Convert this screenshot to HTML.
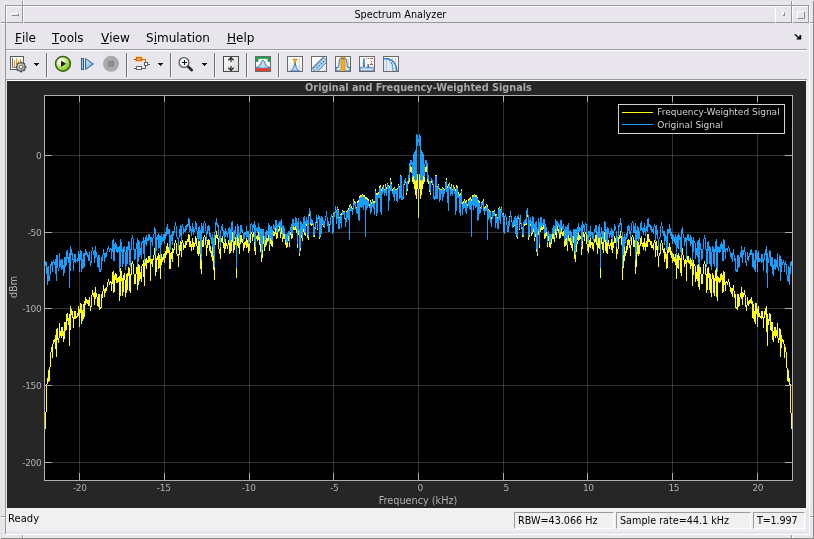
<!DOCTYPE html>
<html><head><meta charset="utf-8"><title>Spectrum Analyzer</title>
<style>
html,body{margin:0;padding:0}
body{width:814px;height:539px;position:relative;overflow:hidden;background:#e8e6ec;font-family:"DejaVu Sans","Liberation Sans",sans-serif;color:#000}
.a{position:absolute}
.g{background:#979799}
.w{background:#ffffff}
.menu{position:absolute;top:29px;height:18px;line-height:18px;font-size:12px;white-space:nowrap}
.menu u{text-decoration:none;display:inline-block;position:relative}
.menu u:after{content:"";position:absolute;left:0;right:0;top:14px;height:1px;background:#000}
.sep{position:absolute;top:53px;width:1px;height:24px;background:#707070}
.sep:after{content:"";position:absolute;left:1px;top:0;width:1px;height:24px;background:#f4f3f6}
.dd{position:absolute;top:63px;width:5px;height:1px;background:#111}
.dd:before{content:"";position:absolute;left:1px;top:1px;width:3px;height:1px;background:#111}
.dd:after{content:"";position:absolute;left:2px;top:2px;width:1px;height:1px;background:#111}
.xl{position:absolute;top:483px;width:40px;text-align:center;font-size:9px;line-height:11px;color:#afafaf;letter-spacing:-0.35px}
.yl{position:absolute;left:0;width:41.3px;text-align:right;font-size:9px;line-height:12px;color:#afafaf;letter-spacing:-0.35px}
.sb{position:absolute;top:512px;height:15px;border:1px solid;border-color:#9a9a9a #fff #fff #9a9a9a;font-size:9.65px;line-height:15px;padding-left:3px;box-sizing:content-box;white-space:nowrap}
.ico{position:absolute;top:56px;width:16px;height:16px}
#root{position:absolute;left:0;top:0;width:814px;height:539px;will-change:transform}
</style></head><body><div id="root">
<!-- ===== window frame (Motif-like) ===== -->
<div class="a" style="left:0;top:0;width:814px;height:1px;background:#e4e4e4"></div>
<div class="a" style="left:0;top:1px;width:814px;height:1px;background:#e6e5e8"></div>
<div class="a" style="left:0;top:0;width:1px;height:539px;background:#e4e4e4"></div>
<div class="a" style="left:1px;top:1px;width:1px;height:538px;background:#e6e5e8"></div>
<div class="a g" style="left:813px;top:1px;width:1px;height:538px;background:#8a8a8a"></div>
<div class="a g" style="left:1px;top:538px;width:813px;height:1px;background:#8a8a8a"></div>
<!-- inner bevel -->
<div class="a g" style="left:5px;top:5px;width:804px;height:1px"></div>
<div class="a g" style="left:5px;top:5px;width:1px;height:529px"></div>
<div class="a w" style="left:809px;top:6px;width:1px;height:529px"></div>
<div class="a w" style="left:6px;top:534px;width:804px;height:1px"></div>
<!-- corner notches -->
<div class="a g" style="left:22px;top:1px;width:1px;height:4px"></div><div class="a w" style="left:23px;top:1px;width:1px;height:4px"></div>
<div class="a g" style="left:791px;top:1px;width:1px;height:4px"></div><div class="a w" style="left:792px;top:1px;width:1px;height:4px"></div>
<div class="a g" style="left:22px;top:535px;width:1px;height:3px"></div><div class="a w" style="left:23px;top:535px;width:1px;height:3px"></div>
<div class="a g" style="left:791px;top:535px;width:1px;height:3px"></div><div class="a w" style="left:792px;top:535px;width:1px;height:3px"></div>
<div class="a g" style="left:1px;top:22px;width:4px;height:1px"></div><div class="a w" style="left:1px;top:23px;width:4px;height:1px"></div>
<div class="a g" style="left:810px;top:22px;width:3px;height:1px"></div><div class="a w" style="left:810px;top:23px;width:3px;height:1px"></div>
<div class="a g" style="left:1px;top:516px;width:4px;height:1px"></div><div class="a w" style="left:1px;top:517px;width:4px;height:1px"></div>
<div class="a g" style="left:810px;top:516px;width:3px;height:1px"></div><div class="a w" style="left:810px;top:517px;width:3px;height:1px"></div>

<!-- ===== title bar ===== -->
<!-- window menu button -->
<div class="a w" style="left:6px;top:6px;width:16px;height:1px"></div>
<div class="a w" style="left:6px;top:6px;width:1px;height:16px"></div>
<div class="a g" style="left:7px;top:22px;width:16px;height:1px"></div>
<div class="a g" style="left:22px;top:6px;width:1px;height:17px"></div>
<div class="a" style="left:11px;top:13px;width:6px;height:1px;border:1px solid;border-color:#fff #8e8e8e #8e8e8e #fff"></div>
<!-- title area -->
<div class="a w" style="left:23px;top:6px;width:752px;height:1px"></div>
<div class="a w" style="left:23px;top:6px;width:1px;height:16px"></div>
<div class="a g" style="left:24px;top:22px;width:751px;height:1px"></div>
<div class="a" id="ttl" style="left:24.4px;top:7px;width:752px;height:15px;line-height:15px;text-align:center;font-size:9.67px">Spectrum Analyzer</div>
<!-- minimize -->
<div class="a w" style="left:775px;top:6px;width:16px;height:1px"></div>
<div class="a w" style="left:775px;top:6px;width:1px;height:16px"></div>
<div class="a g" style="left:776px;top:22px;width:16px;height:1px"></div>
<div class="a g" style="left:791px;top:6px;width:1px;height:17px"></div>
<div class="a" style="left:782px;top:12px;width:1px;height:2px;border:1px solid;border-color:#fff #8e8e8e #8e8e8e #fff"></div>
<!-- maximize -->
<div class="a w" style="left:792px;top:6px;width:16px;height:1px"></div>
<div class="a w" style="left:792px;top:6px;width:1px;height:16px"></div>
<div class="a g" style="left:793px;top:22px;width:16px;height:1px"></div>
<div class="a g" style="left:808px;top:6px;width:1px;height:17px"></div>
<div class="a" style="left:797px;top:11px;width:6px;height:6px;border:1px solid;border-color:#fff #8e8e8e #8e8e8e #fff"></div>

<!-- ===== menu bar ===== -->
<div class="menu" style="left:15px"><u>F</u>ile</div>
<div class="menu" style="left:52px"><u>T</u>ools</div>
<div class="menu" style="left:101px"><u>V</u>iew</div>
<div class="menu" style="left:146px">S<u>i</u>mulation</div>
<div class="menu" style="left:227px"><u>H</u>elp</div>
<svg class="a" style="left:793px;top:33px" width="10" height="8" viewBox="0 0 10 8"><path d="M1.2 1.6 L2.4 1 L6 4.2 L6.6 2.2 L8.2 2 L8.2 6.6 L3.4 6.6 L3.6 5.4 L5 5.2 Z" fill="#000"/></svg>
<div class="a g" style="left:6px;top:49px;width:801px;height:1px;background:#9c9c9c"></div>
<div class="a w" style="left:6px;top:50px;width:801px;height:1px"></div>

<!-- ===== toolbar ===== -->
<!-- icon 1: configuration -->
<svg class="a" style="left:10px;top:56px" width="18" height="18" viewBox="0 0 18 18">
 <g shape-rendering="crispEdges">
  <rect x="0.5" y="0.5" width="13" height="13" fill="#fdfdfd" stroke="#5a5a5a"/>
  <rect x="2" y="2" width="1" height="10" fill="#6a6a6a"/>
  <rect x="2" y="11" width="9" height="1" fill="#8a8a8a"/>
  <rect x="4" y="4" width="1" height="7" fill="#f59d10"/>
  <rect x="6" y="2" width="1" height="9" fill="#f59d10"/>
  <rect x="8" y="5" width="1" height="4" fill="#f59d10"/>
  <rect x="10" y="3" width="1" height="4" fill="#f59d10"/>
 </g>
 <defs><linearGradient id="gg" x1="0" y1="0" x2="1" y2="1"><stop offset="0" stop-color="#e2e2e2"/><stop offset="1" stop-color="#8e8e8e"/></linearGradient></defs>
 <g transform="translate(11,11)">
  <g fill="#4a4a4a">
   <rect x="-1.2" y="-5.3" width="2.4" height="10.6"/>
   <rect x="-1.2" y="-5.3" width="2.4" height="10.6" transform="rotate(45)"/>
   <rect x="-1.2" y="-5.3" width="2.4" height="10.6" transform="rotate(90)"/>
   <rect x="-1.2" y="-5.3" width="2.4" height="10.6" transform="rotate(135)"/>
  </g>
  <circle r="4.1" fill="url(#gg)" stroke="#4e4e4e" stroke-width="0.9"/>
  <circle r="1.7" fill="#f4f4f4" stroke="#6a6a6a" stroke-width="0.9"/>
 </g>
</svg>
<div class="dd" style="left:34px"></div>
<div class="sep" style="left:46px"></div>
<!-- play -->
<svg class="a" style="left:54px;top:55px" width="18" height="18" viewBox="0 0 18 18">
 <defs><radialGradient id="gp" cx="0.33" cy="0.3" r="0.8"><stop offset="0" stop-color="#ffffff"/><stop offset="0.3" stop-color="#e4f5c0"/><stop offset="0.75" stop-color="#8fd032"/><stop offset="1" stop-color="#6aa51d"/></radialGradient></defs>
 <circle cx="9" cy="8.8" r="7.4" fill="url(#gp)" stroke="#38620f" stroke-width="1.5"/>
 <path d="M7 5.8 L12.2 8.8 L7 11.9 Z" fill="#1c1c1c"/>
</svg>
<!-- step forward -->
<svg class="a" style="left:80px;top:57px" width="16" height="14" viewBox="0 0 16 14">
 <defs><linearGradient id="gs" x1="0" y1="0" x2="1" y2="1"><stop offset="0" stop-color="#dcefff"/><stop offset="1" stop-color="#5fa3dc"/></linearGradient></defs>
 <rect x="1.5" y="1.5" width="2" height="11" fill="#9fcaf0" stroke="#2c5d8c"/>
 <path d="M5.6 1.6 L13.4 7 L5.6 12.4 Z" fill="url(#gs)" stroke="#2c5d8c" stroke-width="1"/>
</svg>
<!-- stop (disabled) -->
<svg class="a" style="left:102px;top:55px" width="18" height="18" viewBox="0 0 18 18">
 <circle cx="9" cy="8.8" r="8" fill="#a9a9a9"/>
 <rect x="6" y="5.8" width="6" height="6" fill="#8b8b8b"/>
</svg>
<div class="sep" style="left:126px"></div>
<!-- block diagram / highlight -->
<svg class="a" style="left:133px;top:55px" width="18" height="18" viewBox="0 0 18 18" shape-rendering="crispEdges">
 <rect x="2" y="1" width="8" height="6" fill="#ffd890"/>
 <rect x="3.5" y="2.5" width="5" height="3" fill="#f6a24a" stroke="#d8611a"/>
 <rect x="1" y="4" width="2" height="1" fill="#555"/>
 <rect x="9" y="4" width="4" height="1" fill="#d8611a"/>
 <rect x="12" y="4" width="1" height="3" fill="#d8611a"/>
 <rect x="11.5" y="7.5" width="3" height="3" fill="#fff" stroke="#666"/>
 <rect x="15" y="9" width="2" height="1" fill="#666"/>
 <rect x="12" y="11" width="1" height="3" fill="#666"/>
 <rect x="9" y="13" width="4" height="1" fill="#666"/>
 <rect x="3.5" y="11.5" width="5" height="3" fill="#fff" stroke="#666"/>
 <rect x="1" y="13" width="2" height="1" fill="#555"/>
</svg>
<div class="dd" style="left:158px"></div>
<div class="sep" style="left:170px"></div>
<!-- zoom -->
<svg class="a" style="left:177px;top:55px" width="18" height="18" viewBox="0 0 18 18">
 <line x1="10.5" y1="11" x2="14.8" y2="15.2" stroke="#2a2a2a" stroke-width="2.6" stroke-linecap="round"/>
 <circle cx="7" cy="7.5" r="4.9" fill="#eef6fd" stroke="#5a5a5a" stroke-width="1.3"/>
 <path d="M4.5 7.5 H9.5 M7 5 V10" stroke="#111" stroke-width="1" shape-rendering="crispEdges"/>
</svg>
<div class="dd" style="left:202px"></div>
<div class="sep" style="left:214px"></div>
<!-- autoscale -->
<svg class="a" style="left:223px;top:56px" width="16" height="16" viewBox="0 0 16 16">
 <defs><linearGradient id="ga" x1="0" y1="0" x2="1" y2="1"><stop offset="0" stop-color="#ffffff"/><stop offset="1" stop-color="#d4d4d4"/></linearGradient></defs>
 <rect x="0.5" y="0.5" width="15" height="15" fill="url(#ga)" stroke="#4a4a4a" shape-rendering="crispEdges"/>
 <path d="M8 2 V6 M5.3 4.2 L8 1.6 L10.7 4.2" fill="none" stroke="#222" stroke-width="1.2"/>
 <path d="M8 14 V10 M5.3 11.8 L8 14.4 L10.7 11.8" fill="none" stroke="#222" stroke-width="1.2"/>
</svg>
<div class="sep" style="left:246px"></div>
<!-- spectral mask -->
<svg class="a" style="left:255px;top:56px" width="16" height="16" viewBox="0 0 16 16">
 <rect x="0" y="0" width="16" height="16" fill="#fff"/>
 <path d="M0.5 0.5 H15.5 V5.5 H13 V3.5 Q13 2.6 12 2.6 H4 Q3 2.6 3 3.5 V5.5 H0.5 Z" fill="#17a84a" stroke="#12823a" stroke-width="0.6"/>
 <path d="M0 11.3 C3.5 11.3 4.8 10 5.8 7.6 C6.7 5.4 7.2 4.4 8 4.4 C8.8 4.4 9.3 5.4 10.2 7.6 C11.2 10 12.5 11.3 16 11.3 V12.2 H0 Z" fill="#b6d6ee" stroke="#2b6fb3" stroke-width="1"/><path d="M8 5 V12" stroke="#dfeaf3" stroke-width="0.8"/>
 <rect x="0" y="12.2" width="16" height="3.3" fill="#e53a2a"/>
 <rect x="0.5" y="0.5" width="15" height="15" fill="none" stroke="#6a6a6a" stroke-width="1" shape-rendering="crispEdges"/>
</svg>
<div class="sep" style="left:278px"></div>
<!-- peak finder -->
<svg class="a" style="left:287px;top:56px" width="16" height="16" viewBox="0 0 16 16">
 <defs><linearGradient id="gb" x1="0" y1="0" x2="0" y2="1"><stop offset="0" stop-color="#ffffff"/><stop offset="1" stop-color="#e4e8ec"/></linearGradient></defs>
 <rect x="0.5" y="0.5" width="15" height="15" fill="url(#gb)" stroke="#6a6a6a" shape-rendering="crispEdges"/>
 <rect x="12" y="2" width="1" height="12" fill="#d2d6da"/>
 <path d="M3.5 15 C6.5 14 7.2 10 8 6 C8.8 10 9.5 14 12.5 15 Z" fill="#b9d7ee" stroke="#2b6fb3" stroke-width="0.9"/>
 <path d="M5.6 3 H10.4 L8.6 5.6 V7.4 H7.4 V5.6 Z" fill="#f0ac18" stroke="#b87a08" stroke-width="0.5"/>
</svg>
<!-- ruler / cursor measurements -->
<svg class="a" style="left:311px;top:56px" width="16" height="16" viewBox="0 0 16 16">
 <rect x="0.5" y="0.5" width="15" height="15" fill="url(#gb)" stroke="#6a6a6a" shape-rendering="crispEdges"/>
 <path d="M1 12.6 L12.6 1" stroke="#333" stroke-width="1"/>
 <g transform="rotate(-45 8.5 8.5)">
  <rect x="0.5" y="6.6" width="16" height="5.4" fill="#a9d2ef" stroke="#3c78ad" stroke-width="0.8"/>
  <path d="M4.5 8.6 V10 M7.5 8.6 V10 M10.5 8.6 V10 M13.5 8.6 V10" stroke="#2b5f8f" stroke-width="1"/>
 </g>
 <rect x="0.5" y="0.5" width="15" height="15" fill="none" stroke="#6a6a6a" shape-rendering="crispEdges"/>
</svg>
<!-- channel measurements -->
<svg class="a" style="left:335px;top:56px" width="16" height="16" viewBox="0 0 16 16">
 <rect x="0.5" y="0.5" width="15" height="15" fill="url(#gb)" stroke="#6a6a6a" shape-rendering="crispEdges"/>
 <rect x="13" y="2" width="1" height="12" fill="#d2d6da"/>
 <path d="M1 11.5 H3 C4.2 11.5 3.8 2.6 5.2 2.6 H10.8 C12.2 2.6 11.8 11.5 13 11.5 H15 V15 H1 Z" fill="#cfe3f3" stroke="#2b6fb3" stroke-width="1"/>
 <rect x="6" y="1" width="4" height="14" fill="#f7ad12"/>
 <path d="M6 1 V15 M10 1 V15" stroke="#d98608" stroke-width="0.7"/>
 <path d="M6.2 3.2 L7.2 2 L8 3.2 L8.8 2 L9.8 3.2" fill="none" stroke="#2b6fb3" stroke-width="0.8"/>
 <rect x="0.5" y="0.5" width="15" height="15" fill="none" stroke="#6a6a6a" shape-rendering="crispEdges"/>
</svg>
<!-- distortion measurements -->
<svg class="a" style="left:359px;top:56px" width="16" height="16" viewBox="0 0 16 16">
 <rect x="0.5" y="0.5" width="15" height="15" fill="url(#gb)" stroke="#6a6a6a" shape-rendering="crispEdges"/>
 <path d="M1 12 L2.2 11 L3.4 12.2 L4.4 11 L4.9 2.4 L5.5 11.4 L6.6 12.3 L7.8 11.2 L8.6 12.2 L9.2 8 L9.8 12 L11 11.2 L12.2 12.3 L13.4 11.4 L15 12.2 V15 H1 Z" fill="#cfe3f3" stroke="#2b6fb3" stroke-width="0.9"/>
 <g fill="#c8561a" shape-rendering="crispEdges">
  <rect x="7" y="2" width="1" height="1"/><rect x="9" y="2" width="1" height="1"/><rect x="11" y="2" width="3" height="1"/>
  <rect x="12" y="5" width="1" height="1"/><rect x="12" y="6.5" width="1" height="1"/><rect x="11" y="8" width="3" height="1"/>
 </g>
 <rect x="0.5" y="0.5" width="15" height="15" fill="none" stroke="#6a6a6a" shape-rendering="crispEdges"/>
</svg>
<!-- CCDF -->
<svg class="a" style="left:383px;top:56px" width="16" height="16" viewBox="0 0 16 16">
 <rect x="0.5" y="0.5" width="15" height="15" fill="url(#gb)" stroke="#6a6a6a" shape-rendering="crispEdges"/>
 <path d="M1 2.6 H3 C8 2.6 10 8 10.2 15 H1 Z" fill="#d8e8f5"/>
 <path d="M3.5 2 V15 M9.5 2 V15 M12.5 2 V15" stroke="#c6cacf" stroke-width="1"/>
 <path d="M1 2.6 H3 C9.5 2.6 13.6 8 13.8 15" fill="none" stroke="#1f7bd0" stroke-width="1.3"/>
 <path d="M1 2.6 H3 C7 2.8 9.8 8 10.2 15" fill="none" stroke="#1f7bd0" stroke-width="1.2" stroke-dasharray="1.6 1.2"/>
 <rect x="0.5" y="0.5" width="15" height="15" fill="none" stroke="#6a6a6a" shape-rendering="crispEdges"/>
</svg>

<div class="a" style="left:6px;top:79px;width:801px;height:1px;background:#9c9c9c"></div>
<div class="a w" style="left:6px;top:80px;width:801px;height:1px"></div>
<div class="a" style="left:806px;top:81px;width:3px;height:427px;background:#f1f0f3"></div>

<!-- ===== plot panel ===== -->
<div class="a" style="left:7px;top:81px;width:799px;height:427px;background:#262626"></div>
<div class="a" id="ptitle" style="left:7px;top:81px;width:823px;text-align:center;font-size:9.73px;font-weight:bold;line-height:13px;color:#a9a9a9;white-space:nowrap">Original and Frequency-Weighted Signals</div>
<svg class="ax" width="814" height="539" viewBox="0 0 814 539" style="position:absolute;left:0;top:0" shape-rendering="crispEdges">
<rect x="44" y="95" width="749" height="386" fill="#000"/>
<polyline points="45.0,428.8 45.5,428.8 45.9,416.5 46.4,398.1 46.9,385.8 47.4,378.5 47.9,381.7 48.4,370.2 48.9,381.7 49.4,377.2 49.8,371.2 50.3,361.0 50.8,354.3 51.3,348.8 51.8,347.6 52.3,357.6 52.8,346.4 53.2,341.2 53.7,341.2 54.2,340.2 54.7,342.1 55.2,336.6 55.7,335.0 56.2,356.8 56.6,332.7 57.1,327.7 57.6,330.6 58.1,342.5 58.6,341.2 59.1,337.5 59.6,323.5 60.1,332.2 60.5,335.4 61.0,335.1 61.5,338.3 62.0,326.7 62.5,331.8 63.0,335.9 63.5,331.4 63.9,342.4 64.4,326.2 64.9,321.7 65.4,323.4 65.9,331.3 66.4,323.5 66.9,314.7 67.3,314.0 67.8,317.8 68.3,325.2 68.8,321.4 69.3,314.3 69.8,346.0 70.3,307.9 70.8,306.3 71.2,311.0 71.7,313.5 72.2,312.6 72.7,318.4 73.2,317.1 73.7,327.9 74.2,311.0 74.6,315.0 75.1,319.3 75.6,310.8 76.1,317.3 76.6,316.7 77.1,315.8 77.6,314.5 78.0,316.6 78.5,305.9 79.0,308.1 79.5,326.5 80.0,313.9 80.5,304.1 81.0,303.7 81.5,311.6 81.9,324.0 82.4,312.2 82.9,312.2 83.4,304.2 83.9,318.7 84.4,312.7 84.9,302.7 85.3,303.3 85.8,297.1 86.3,301.3 86.8,302.2 87.3,299.6 87.8,303.0 88.3,304.2 88.7,306.1 89.2,297.4 89.7,300.1 90.2,309.3 90.7,311.1 91.2,304.6 91.7,298.8 92.2,292.3 92.6,290.2 93.1,294.2 93.6,297.4 94.1,292.5 94.6,305.0 95.1,297.4 95.6,287.0 96.0,292.8 96.5,296.7 97.0,297.1 97.5,306.3 98.0,297.9 98.5,306.6 99.0,293.7 99.4,295.2 99.9,309.7 100.4,306.6 100.9,309.4 101.4,302.1 101.9,295.7 102.4,296.7 102.9,292.5 103.3,287.4 103.8,285.4 104.3,294.1 104.8,296.9 105.3,288.2 105.8,291.8 106.3,290.8 106.7,287.7 107.2,285.9 107.7,284.2 108.2,280.2 108.7,279.6 109.2,283.4 109.7,285.3 110.1,280.8 110.6,282.0 111.1,282.3 111.6,291.2 112.1,282.6 112.6,272.8 113.1,271.4 113.6,279.9 114.0,292.5 114.5,284.5 115.0,275.2 115.5,273.3 116.0,280.1 116.5,274.3 117.0,282.6 117.4,277.6 117.9,282.7 118.4,278.5 118.9,277.2 119.4,275.8 119.9,301.0 120.4,279.7 120.8,268.4 121.3,274.0 121.8,279.1 122.3,278.0 122.8,295.5 123.3,287.8 123.8,276.3 124.3,273.5 124.7,275.6 125.2,282.3 125.7,297.0 126.2,290.5 126.7,276.2 127.2,273.0 127.7,290.3 128.1,272.5 128.6,267.3 129.1,268.8 129.6,279.5 130.1,293.1 130.6,275.0 131.1,274.8 131.5,271.2 132.0,263.5 132.5,260.9 133.0,264.0 133.5,271.3 134.0,274.3 134.5,275.1 135.0,284.3 135.4,278.0 135.9,275.5 136.4,267.1 136.9,271.9 137.4,262.3 137.9,290.4 138.4,268.2 138.8,264.0 139.3,266.3 139.8,281.0 140.3,274.9 140.8,272.0 141.3,282.3 141.8,267.1 142.2,264.5 142.7,266.2 143.2,262.5 143.7,260.0 144.2,285.6 144.7,262.4 145.2,265.7 145.7,264.7 146.1,257.6 146.6,268.8 147.1,261.9 147.6,261.2 148.1,261.9 148.6,256.0 149.1,257.4 149.5,255.6 150.0,261.8 150.5,280.9 151.0,259.0 151.5,261.0 152.0,263.8 152.5,267.3 152.9,260.2 153.4,257.0 153.9,256.1 154.4,250.7 154.9,248.5 155.4,256.3 155.9,275.9 156.4,260.1 156.8,257.7 157.3,259.2 157.8,257.5 158.3,253.1 158.8,269.3 159.3,266.2 159.8,255.4 160.2,278.6 160.7,260.5 161.2,253.8 161.7,264.5 162.2,260.6 162.7,258.2 163.2,259.2 163.6,256.9 164.1,253.3 164.6,263.0 165.1,256.9 165.6,250.9 166.1,254.5 166.6,252.8 167.1,244.7 167.5,243.2 168.0,252.5 168.5,251.1 169.0,247.4 169.5,260.5 170.0,268.5 170.5,267.0 170.9,254.0 171.4,251.8 171.9,258.1 172.4,262.3 172.9,248.5 173.4,253.1 173.9,249.3 174.3,249.4 174.8,245.1 175.3,239.7 175.8,242.7 176.3,243.8 176.8,252.5 177.3,255.3 177.8,254.3 178.2,257.1 178.7,266.7 179.2,247.5 179.7,251.4 180.2,241.8 180.7,242.0 181.2,257.1 181.6,250.5 182.1,239.9 182.6,242.6 183.1,243.3 183.6,249.6 184.1,247.4 184.6,246.0 185.0,248.0 185.5,242.9 186.0,241.5 186.5,245.1 187.0,240.8 187.5,239.2 188.0,242.1 188.5,234.8 188.9,234.1 189.4,236.3 189.9,247.1 190.4,244.6 190.9,241.5 191.4,251.0 191.9,248.4 192.3,243.3 192.8,237.9 193.3,250.3 193.8,242.2 194.3,245.2 194.8,246.2 195.3,241.1 195.7,237.5 196.2,238.5 196.7,242.3 197.2,247.9 197.7,249.9 198.2,255.9 198.7,243.0 199.2,240.6 199.6,251.1 200.1,254.2 200.6,244.9 201.1,274.3 201.6,237.7 202.1,241.0 202.6,240.9 203.0,247.2 203.5,243.0 204.0,237.2 204.5,236.3 205.0,237.2 205.5,239.8 206.0,245.2 206.4,255.5 206.9,245.1 207.4,247.8 207.9,240.0 208.4,238.8 208.9,245.0 209.4,240.1 209.9,248.8 210.3,248.0 210.8,252.5 211.3,250.6 211.8,254.2 212.3,260.6 212.8,247.5 213.3,256.1 213.7,251.3 214.2,280.4 214.7,245.2 215.2,244.4 215.7,242.2 216.2,231.3 216.7,233.5 217.1,239.3 217.6,236.7 218.1,237.8 218.6,244.6 219.1,249.7 219.6,252.3 220.1,254.7 220.6,259.3 221.0,242.4 221.5,240.1 222.0,238.1 222.5,237.2 223.0,242.9 223.5,248.0 224.0,242.3 224.4,253.1 224.9,252.1 225.4,239.2 225.9,242.5 226.4,245.5 226.9,244.0 227.4,248.2 227.8,249.1 228.3,239.8 228.8,245.4 229.3,237.8 229.8,254.1 230.3,251.0 230.8,239.9 231.3,251.2 231.7,235.1 232.2,231.7 232.7,237.0 233.2,245.3 233.7,252.9 234.2,244.2 234.7,250.0 235.1,238.7 235.6,237.8 236.1,245.9 236.6,278.0 237.1,239.5 237.6,234.2 238.1,248.2 238.5,236.6 239.0,242.7 239.5,253.5 240.0,244.7 240.5,234.6 241.0,242.0 241.5,235.2 242.0,239.0 242.4,239.3 242.9,241.2 243.4,250.0 243.9,250.2 244.4,242.1 244.9,242.2 245.4,243.5 245.8,244.7 246.3,235.8 246.8,247.7 247.3,245.3 247.8,239.9 248.3,242.1 248.8,252.9 249.2,249.7 249.7,250.6 250.2,238.3 250.7,234.4 251.2,232.4 251.7,232.9 252.2,234.3 252.7,240.8 253.1,234.9 253.6,236.4 254.1,231.3 254.6,229.6 255.1,255.4 255.6,233.1 256.1,238.7 256.5,236.6 257.0,238.8 257.5,235.4 258.0,240.6 258.5,231.3 259.0,235.3 259.5,240.5 259.9,242.8 260.4,251.7 260.9,237.5 261.4,237.6 261.9,262.1 262.4,244.4 262.9,236.1 263.4,238.1 263.8,242.3 264.3,245.0 264.8,251.0 265.3,242.4 265.8,239.8 266.3,237.3 266.8,244.5 267.2,239.6 267.7,238.9 268.2,241.2 268.7,229.5 269.2,232.9 269.7,251.3 270.2,240.4 270.6,234.3 271.1,233.5 271.6,240.6 272.1,247.0 272.6,235.5 273.1,235.2 273.6,230.7 274.1,232.3 274.5,235.6 275.0,234.0 275.5,227.8 276.0,226.5 276.5,227.1 277.0,238.6 277.5,232.2 277.9,232.9 278.4,230.6 278.9,229.3 279.4,231.4 279.9,226.4 280.4,229.2 280.9,237.5 281.3,224.8 281.8,226.8 282.3,238.8 282.8,241.8 283.3,234.6 283.8,230.0 284.3,238.5 284.8,237.7 285.2,240.9 285.7,239.6 286.2,247.8 286.7,239.1 287.2,246.8 287.7,242.5 288.2,235.7 288.6,241.0 289.1,237.4 289.6,247.4 290.1,232.9 290.6,232.5 291.1,231.5 291.6,228.0 292.0,238.5 292.5,231.4 293.0,222.9 293.5,223.4 294.0,229.5 294.5,226.9 295.0,229.7 295.5,225.2 295.9,221.0 296.4,222.7 296.9,228.5 297.4,247.5 297.9,226.5 298.4,221.8 298.9,233.8 299.3,233.5 299.8,255.8 300.3,244.4 300.8,224.2 301.3,226.3 301.8,235.5 302.3,240.7 302.7,226.6 303.2,232.2 303.7,221.5 304.2,218.4 304.7,232.8 305.2,235.6 305.7,223.6 306.2,226.3 306.6,219.3 307.1,223.6 307.6,227.8 308.1,239.6 308.6,228.4 309.1,213.8 309.6,210.1 310.0,212.7 310.5,220.2 311.0,225.1 311.5,221.2 312.0,225.5 312.5,222.2 313.0,224.2 313.4,232.0 313.9,237.1 314.4,234.8 314.9,229.2 315.4,228.9 315.9,225.5 316.4,216.4 316.9,218.3 317.3,230.2 317.8,221.1 318.3,216.6 318.8,216.3 319.3,219.2 319.8,237.4 320.3,236.7 320.7,221.2 321.2,216.7 321.7,234.3 322.2,219.8 322.7,217.7 323.2,226.9 323.7,220.6 324.1,224.1 324.6,227.9 325.1,220.0 325.6,218.4 326.1,215.2 326.6,211.3 327.1,218.2 327.6,226.0 328.0,221.3 328.5,226.0 329.0,231.7 329.5,229.2 330.0,224.7 330.5,218.4 331.0,216.9 331.4,214.6 331.9,215.0 332.4,221.3 332.9,233.5 333.4,222.1 333.9,213.4 334.4,215.3 334.8,215.5 335.3,207.5 335.8,205.8 336.3,215.1 336.8,222.6 337.3,212.3 337.8,206.8 338.3,211.3 338.7,227.5 339.2,227.8 339.7,221.8 340.2,214.0 340.7,215.9 341.2,225.7 341.7,227.1 342.1,209.8 342.6,213.2 343.1,213.7 343.6,210.7 344.1,214.9 344.6,211.2 345.1,219.3 345.5,226.0 346.0,221.8 346.5,210.9 347.0,216.6 347.5,209.6 348.0,214.3 348.5,218.6 349.0,208.3 349.4,238.5 349.9,205.6 350.4,204.9 350.9,209.8 351.4,207.4 351.9,206.7 352.4,211.6 352.8,213.8 353.3,200.9 353.8,199.8 354.3,203.0 354.8,202.2 355.3,202.2 355.8,206.8 356.2,207.2 356.7,210.4 357.2,212.1 357.7,201.7 358.2,201.2 358.7,215.7 359.2,219.7 359.7,199.5 360.1,195.5 360.6,200.9 361.1,206.1 361.6,201.0 362.1,193.6 362.6,196.4 363.1,206.5 363.5,208.2 364.0,195.0 364.5,196.6 365.0,203.2 365.5,235.0 366.0,197.1 366.5,203.1 366.9,207.7 367.4,201.6 367.9,198.3 368.4,202.7 368.9,203.2 369.4,206.0 369.9,204.3 370.4,212.4 370.8,199.9 371.3,204.1 371.8,209.9 372.3,198.7 372.8,202.0 373.3,201.6 373.8,204.2 374.2,210.1 374.7,212.8 375.2,194.7 375.7,188.8 376.2,195.6 376.7,213.9 377.2,209.1 377.6,199.3 378.1,192.1 378.6,194.5 379.1,196.0 379.6,187.1 380.1,186.4 380.6,194.7 381.1,213.5 381.5,189.2 382.0,189.0 382.5,192.2 383.0,187.3 383.5,185.4 384.0,189.7 384.5,189.3 384.9,193.7 385.4,184.4 385.9,185.8 386.4,194.2 386.9,188.2 387.4,183.1 387.9,183.4 388.3,187.3 388.8,209.4 389.3,186.3 389.8,195.5 390.3,182.0 390.8,178.4 391.3,187.7 391.8,186.6 392.2,191.3 392.7,191.7 393.2,188.5 393.7,189.5 394.2,199.7 394.7,187.0 395.2,192.2 395.6,192.6 396.1,188.6 396.6,194.1 397.1,201.1 397.6,191.5 398.1,187.5 398.6,185.3 399.0,186.2 399.5,188.6 400.0,199.1 400.5,179.4 401.0,175.4 401.5,181.7 402.0,199.5 402.5,199.5 402.9,196.6 403.4,199.4 403.9,185.8 404.4,181.3 404.9,183.1 405.4,180.1 405.9,181.0 406.3,189.6 406.8,195.2 407.3,186.0 407.8,187.8 408.3,178.5 408.8,183.5 409.3,180.2 409.7,172.1 410.2,165.3 410.7,171.5 411.2,168.1 411.7,167.0 412.2,176.3 412.7,181.6 413.2,166.2 413.6,183.9 414.1,167.0 414.6,189.3 415.1,170.9 415.6,194.6 416.1,177.0 416.6,198.5 417.0,173.9 417.5,177.0 418.0,189.3 418.5,218.4 419.0,189.3 419.5,177.0 420.0,173.9 420.4,198.5 420.9,177.0 421.4,194.6 421.9,170.9 422.4,189.3 422.9,167.0 423.4,183.9 423.8,166.2 424.3,181.6 424.8,176.3 425.3,167.0 425.8,168.1 426.3,171.5 426.8,165.3 427.3,172.1 427.7,180.2 428.2,183.5 428.7,178.5 429.2,187.8 429.7,186.0 430.2,195.2 430.7,189.6 431.1,181.0 431.6,180.1 432.1,183.1 432.6,181.3 433.1,185.8 433.6,199.4 434.1,196.6 434.5,199.5 435.0,199.5 435.5,181.7 436.0,175.4 436.5,179.4 437.0,199.1 437.5,188.6 438.0,186.2 438.4,185.3 438.9,187.5 439.4,191.5 439.9,201.1 440.4,194.1 440.9,188.6 441.4,192.6 441.8,192.2 442.3,187.0 442.8,199.7 443.3,189.5 443.8,188.5 444.3,191.7 444.8,191.3 445.2,186.6 445.7,187.7 446.2,178.4 446.7,182.0 447.2,195.5 447.7,186.3 448.2,209.4 448.7,187.3 449.1,183.4 449.6,183.1 450.1,188.2 450.6,194.2 451.1,185.8 451.6,184.4 452.1,193.7 452.5,189.3 453.0,189.7 453.5,185.4 454.0,187.3 454.5,192.2 455.0,189.0 455.5,189.2 455.9,213.5 456.4,194.7 456.9,186.4 457.4,187.1 457.9,196.0 458.4,194.5 458.9,192.1 459.4,199.3 459.8,209.1 460.3,213.9 460.8,195.6 461.3,188.8 461.8,194.7 462.3,212.8 462.8,210.1 463.2,204.2 463.7,201.6 464.2,202.0 464.7,198.7 465.2,209.9 465.7,204.1 466.2,199.9 466.6,212.4 467.1,204.3 467.6,206.0 468.1,203.2 468.6,202.7 469.1,198.3 469.6,201.6 470.1,207.7 470.5,203.1 471.0,197.1 471.5,235.0 472.0,203.2 472.5,196.6 473.0,195.0 473.5,208.2 473.9,206.5 474.4,196.4 474.9,193.6 475.4,201.0 475.9,206.1 476.4,200.9 476.9,195.5 477.3,199.5 477.8,219.7 478.3,215.7 478.8,201.2 479.3,201.7 479.8,212.1 480.3,210.4 480.8,207.2 481.2,206.8 481.7,202.2 482.2,202.2 482.7,203.0 483.2,199.8 483.7,200.9 484.2,213.8 484.6,211.6 485.1,206.7 485.6,207.4 486.1,209.8 486.6,204.9 487.1,205.6 487.6,238.5 488.0,208.3 488.5,218.6 489.0,214.3 489.5,209.6 490.0,216.6 490.5,210.9 491.0,221.8 491.5,226.0 491.9,219.3 492.4,211.2 492.9,214.9 493.4,210.7 493.9,213.7 494.4,213.2 494.9,209.8 495.3,227.1 495.8,225.7 496.3,215.9 496.8,214.0 497.3,221.8 497.8,227.8 498.3,227.5 498.7,211.3 499.2,206.8 499.7,212.3 500.2,222.6 500.7,215.1 501.2,205.8 501.7,207.5 502.2,215.5 502.6,215.3 503.1,213.4 503.6,222.1 504.1,233.5 504.6,221.3 505.1,215.0 505.6,214.6 506.0,216.9 506.5,218.4 507.0,224.7 507.5,229.2 508.0,231.7 508.5,226.0 509.0,221.3 509.4,226.0 509.9,218.2 510.4,211.3 510.9,215.2 511.4,218.4 511.9,220.0 512.4,227.9 512.9,224.1 513.3,220.6 513.8,226.9 514.3,217.7 514.8,219.8 515.3,234.3 515.8,216.7 516.3,221.2 516.7,236.7 517.2,237.4 517.7,219.2 518.2,216.3 518.7,216.6 519.2,221.1 519.7,230.2 520.1,218.3 520.6,216.4 521.1,225.5 521.6,228.9 522.1,229.2 522.6,234.8 523.1,237.1 523.6,232.0 524.0,224.2 524.5,222.2 525.0,225.5 525.5,221.2 526.0,225.1 526.5,220.2 527.0,212.7 527.4,210.1 527.9,213.8 528.4,228.4 528.9,239.6 529.4,227.8 529.9,223.6 530.4,219.3 530.8,226.3 531.3,223.6 531.8,235.6 532.3,232.8 532.8,218.4 533.3,221.5 533.8,232.2 534.3,226.6 534.7,240.7 535.2,235.5 535.7,226.3 536.2,224.2 536.7,244.4 537.2,255.8 537.7,233.5 538.1,233.8 538.6,221.8 539.1,226.5 539.6,247.5 540.1,228.5 540.6,222.7 541.1,221.0 541.5,225.2 542.0,229.7 542.5,226.9 543.0,229.5 543.5,223.4 544.0,222.9 544.5,231.4 545.0,238.5 545.4,228.0 545.9,231.5 546.4,232.5 546.9,232.9 547.4,247.4 547.9,237.4 548.4,241.0 548.8,235.7 549.3,242.5 549.8,246.8 550.3,239.1 550.8,247.8 551.3,239.6 551.8,240.9 552.2,237.7 552.7,238.5 553.2,230.0 553.7,234.6 554.2,241.8 554.7,238.8 555.2,226.8 555.7,224.8 556.1,237.5 556.6,229.2 557.1,226.4 557.6,231.4 558.1,229.3 558.6,230.6 559.1,232.9 559.5,232.2 560.0,238.6 560.5,227.1 561.0,226.5 561.5,227.8 562.0,234.0 562.5,235.6 562.9,232.3 563.4,230.7 563.9,235.2 564.4,235.5 564.9,247.0 565.4,240.6 565.9,233.5 566.4,234.3 566.8,240.4 567.3,251.3 567.8,232.9 568.3,229.5 568.8,241.2 569.3,238.9 569.8,239.6 570.2,244.5 570.7,237.3 571.2,239.8 571.7,242.4 572.2,251.0 572.7,245.0 573.2,242.3 573.6,238.1 574.1,236.1 574.6,244.4 575.1,262.1 575.6,237.6 576.1,237.5 576.6,251.7 577.1,242.8 577.5,240.5 578.0,235.3 578.5,231.3 579.0,240.6 579.5,235.4 580.0,238.8 580.5,236.6 580.9,238.7 581.4,233.1 581.9,255.4 582.4,229.6 582.9,231.3 583.4,236.4 583.9,234.9 584.3,240.8 584.8,234.3 585.3,232.9 585.8,232.4 586.3,234.4 586.8,238.3 587.3,250.6 587.8,249.7 588.2,252.9 588.7,242.1 589.2,239.9 589.7,245.3 590.2,247.7 590.7,235.8 591.2,244.7 591.6,243.5 592.1,242.2 592.6,242.1 593.1,250.2 593.6,250.0 594.1,241.2 594.6,239.3 595.0,239.0 595.5,235.2 596.0,242.0 596.5,234.6 597.0,244.7 597.5,253.5 598.0,242.7 598.5,236.6 598.9,248.2 599.4,234.2 599.9,239.5 600.4,278.0 600.9,245.9 601.4,237.8 601.9,238.7 602.3,250.0 602.8,244.2 603.3,252.9 603.8,245.3 604.3,237.0 604.8,231.7 605.3,235.1 605.7,251.2 606.2,239.9 606.7,251.0 607.2,254.1 607.7,237.8 608.2,245.4 608.7,239.8 609.2,249.1 609.6,248.2 610.1,244.0 610.6,245.5 611.1,242.5 611.6,239.2 612.1,252.1 612.6,253.1 613.0,242.3 613.5,248.0 614.0,242.9 614.5,237.2 615.0,238.1 615.5,240.1 616.0,242.4 616.4,259.3 616.9,254.7 617.4,252.3 617.9,249.7 618.4,244.6 618.9,237.8 619.4,236.7 619.9,239.3 620.3,233.5 620.8,231.3 621.3,242.2 621.8,244.4 622.3,245.2 622.8,280.4 623.3,251.3 623.7,256.1 624.2,247.5 624.7,260.6 625.2,254.2 625.7,250.6 626.2,252.5 626.7,248.0 627.1,248.8 627.6,240.1 628.1,245.0 628.6,238.8 629.1,240.0 629.6,247.8 630.1,245.1 630.6,255.5 631.0,245.2 631.5,239.8 632.0,237.2 632.5,236.3 633.0,237.2 633.5,243.0 634.0,247.2 634.4,240.9 634.9,241.0 635.4,237.7 635.9,274.3 636.4,244.9 636.9,254.2 637.4,251.1 637.8,240.6 638.3,243.0 638.8,255.9 639.3,249.9 639.8,247.9 640.3,242.3 640.8,238.5 641.3,237.5 641.7,241.1 642.2,246.2 642.7,245.2 643.2,242.2 643.7,250.3 644.2,237.9 644.7,243.3 645.1,248.4 645.6,251.0 646.1,241.5 646.6,244.6 647.1,247.1 647.6,236.3 648.1,234.1 648.5,234.8 649.0,242.1 649.5,239.2 650.0,240.8 650.5,245.1 651.0,241.5 651.5,242.9 652.0,248.0 652.4,246.0 652.9,247.4 653.4,249.6 653.9,243.3 654.4,242.6 654.9,239.9 655.4,250.5 655.8,257.1 656.3,242.0 656.8,241.8 657.3,251.4 657.8,247.5 658.3,266.7 658.8,257.1 659.2,254.3 659.7,255.3 660.2,252.5 660.7,243.8 661.2,242.7 661.7,239.7 662.2,245.1 662.7,249.4 663.1,249.3 663.6,253.1 664.1,248.5 664.6,262.3 665.1,258.1 665.6,251.8 666.1,254.0 666.5,267.0 667.0,268.5 667.5,260.5 668.0,247.4 668.5,251.1 669.0,252.5 669.5,243.2 669.9,244.7 670.4,252.8 670.9,254.5 671.4,250.9 671.9,256.9 672.4,263.0 672.9,253.3 673.4,256.9 673.8,259.2 674.3,258.2 674.8,260.6 675.3,264.5 675.8,253.8 676.3,260.5 676.8,278.6 677.2,255.4 677.7,266.2 678.2,269.3 678.7,253.1 679.2,257.5 679.7,259.2 680.2,257.7 680.6,260.1 681.1,275.9 681.6,256.3 682.1,248.5 682.6,250.7 683.1,256.1 683.6,257.0 684.1,260.2 684.5,267.3 685.0,263.8 685.5,261.0 686.0,259.0 686.5,280.9 687.0,261.8 687.5,255.6 687.9,257.4 688.4,256.0 688.9,261.9 689.4,261.2 689.9,261.9 690.4,268.8 690.9,257.6 691.3,264.7 691.8,265.7 692.3,262.4 692.8,285.6 693.3,260.0 693.8,262.5 694.3,266.2 694.8,264.5 695.2,267.1 695.7,282.3 696.2,272.0 696.7,274.9 697.2,281.0 697.7,266.3 698.2,264.0 698.6,268.2 699.1,290.4 699.6,262.3 700.1,271.9 700.6,267.1 701.1,275.5 701.6,278.0 702.0,284.3 702.5,275.1 703.0,274.3 703.5,271.3 704.0,264.0 704.5,260.9 705.0,263.5 705.5,271.2 705.9,274.8 706.4,275.0 706.9,293.1 707.4,279.5 707.9,268.8 708.4,267.3 708.9,272.5 709.3,290.3 709.8,273.0 710.3,276.2 710.8,290.5 711.3,297.0 711.8,282.3 712.3,275.6 712.7,273.5 713.2,276.3 713.7,287.8 714.2,295.5 714.7,278.0 715.2,279.1 715.7,274.0 716.2,268.4 716.6,279.7 717.1,301.0 717.6,275.8 718.1,277.2 718.6,278.5 719.1,282.7 719.6,277.6 720.0,282.6 720.5,274.3 721.0,280.1 721.5,273.3 722.0,275.2 722.5,284.5 723.0,292.5 723.4,279.9 723.9,271.4 724.4,272.8 724.9,282.6 725.4,291.2 725.9,282.3 726.4,282.0 726.9,280.8 727.3,285.3 727.8,283.4 728.3,279.6 728.8,280.2 729.3,284.2 729.8,285.9 730.3,287.7 730.7,290.8 731.2,291.8 731.7,288.2 732.2,296.9 732.7,294.1 733.2,285.4 733.7,287.4 734.1,292.5 734.6,296.7 735.1,295.7 735.6,302.1 736.1,309.4 736.6,306.6 737.1,309.7 737.6,295.2 738.0,293.7 738.5,306.6 739.0,297.9 739.5,306.3 740.0,297.1 740.5,296.7 741.0,292.8 741.4,287.0 741.9,297.4 742.4,305.0 742.9,292.5 743.4,297.4 743.9,294.2 744.4,290.2 744.8,292.3 745.3,298.8 745.8,304.6 746.3,311.1 746.8,309.3 747.3,300.1 747.8,297.4 748.3,306.1 748.7,304.2 749.2,303.0 749.7,299.6 750.2,302.2 750.7,301.3 751.2,297.1 751.7,303.3 752.1,302.7 752.6,312.7 753.1,318.7 753.6,304.2 754.1,312.2 754.6,312.2 755.1,324.0 755.5,311.6 756.0,303.7 756.5,304.1 757.0,313.9 757.5,326.5 758.0,308.1 758.5,305.9 759.0,316.6 759.4,314.5 759.9,315.8 760.4,316.7 760.9,317.3 761.4,310.8 761.9,319.3 762.4,315.0 762.8,311.0 763.3,327.9 763.8,317.1 764.3,318.4 764.8,312.6 765.3,313.5 765.8,311.0 766.2,306.3 766.7,307.9 767.2,346.0 767.7,314.3 768.2,321.4 768.7,325.2 769.2,317.8 769.7,314.0 770.1,314.7 770.6,323.5 771.1,331.3 771.6,323.4 772.1,321.7 772.6,326.2 773.1,342.4 773.5,331.4 774.0,335.9 774.5,331.8 775.0,326.7 775.5,338.3 776.0,335.1 776.5,335.4 776.9,332.2 777.4,323.5 777.9,337.5 778.4,341.2 778.9,342.5 779.4,330.6 779.9,327.7 780.4,332.7 780.8,356.8 781.3,335.0 781.8,336.6 782.3,342.1 782.8,340.2 783.3,341.2 783.8,341.2 784.2,346.4 784.7,357.6 785.2,347.6 785.7,348.8 786.2,354.3 786.7,361.0 787.2,371.2 787.6,377.2 788.1,381.7 788.6,370.2 789.1,381.7 789.6,378.5 790.1,385.8 790.6,398.1 791.1,416.5 791.5,428.8 792.0,428.8" fill="none" stroke="#ffff11" stroke-width="1"/>
<polyline points="45.0,262.3 45.5,265.7 45.9,261.4 46.4,263.8 46.9,274.2 47.4,267.3 47.9,285.1 48.4,265.9 48.9,280.7 49.4,280.8 49.8,278.2 50.3,270.5 50.8,265.1 51.3,261.8 51.8,262.1 52.3,271.7 52.8,265.2 53.2,260.3 53.7,261.9 54.2,262.1 54.7,264.8 55.2,260.7 55.7,259.5 56.2,281.4 56.6,259.3 57.1,254.6 57.6,258.0 58.1,270.3 58.6,270.2 59.1,267.3 59.6,253.3 60.1,261.9 60.5,266.4 61.0,266.0 61.5,270.3 62.0,258.7 62.5,263.8 63.0,268.9 63.5,264.6 63.9,276.3 64.4,260.9 64.9,256.6 65.4,258.7 65.9,267.0 66.4,260.2 66.9,251.7 67.3,251.2 67.8,255.5 68.3,263.2 68.8,260.2 69.3,253.3 69.8,288.1 70.3,247.8 70.8,246.4 71.2,251.5 71.7,254.4 72.2,253.8 72.7,260.0 73.2,258.8 73.7,270.8 74.2,253.6 74.6,257.7 75.1,262.6 75.6,254.3 76.1,260.9 76.6,260.6 77.1,260.1 77.6,259.0 78.0,261.6 78.5,251.0 79.0,253.3 79.5,272.1 80.0,260.1 80.5,250.7 81.0,250.6 81.5,258.8 81.9,271.8 82.4,260.8 82.9,261.5 83.4,253.5 83.9,267.9 84.4,263.5 84.9,253.5 85.3,254.6 85.8,248.8 86.3,253.2 86.8,255.0 87.3,252.6 87.8,256.4 88.3,257.9 88.7,260.7 89.2,251.9 89.7,255.1 90.2,264.5 90.7,266.1 91.2,260.6 91.7,255.2 92.2,249.0 92.6,247.2 93.1,251.5 93.6,255.2 94.1,250.4 94.6,263.4 95.1,256.4 95.6,246.0 96.0,251.9 96.5,256.4 97.0,256.9 97.5,267.0 98.0,258.3 98.5,267.6 99.0,255.1 99.4,256.5 99.9,271.6 100.4,268.7 100.9,271.6 101.4,264.9 101.9,258.8 102.4,259.9 102.9,256.2 103.3,251.2 103.8,249.5 104.3,258.3 104.8,261.7 105.3,253.2 105.8,256.8 106.3,256.3 106.7,253.3 107.2,251.7 107.7,250.2 108.2,246.4 108.7,246.0 109.2,250.0 109.7,252.1 110.1,247.8 110.6,249.2 111.1,249.7 111.6,258.7 112.1,250.5 112.6,240.8 113.1,239.5 113.6,248.1 114.0,261.0 114.5,253.3 115.0,244.1 115.5,242.4 116.0,249.4 116.5,243.7 117.0,252.0 117.4,247.5 117.9,252.6 118.4,248.7 118.9,247.5 119.4,246.4 119.9,271.6 120.4,250.8 120.8,239.4 121.3,245.1 121.8,250.5 122.3,249.5 122.8,266.8 123.3,259.7 123.8,248.4 124.3,245.6 124.7,247.9 125.2,254.7 125.7,269.5 126.2,263.5 126.7,249.2 127.2,246.1 127.7,263.6 128.1,246.0 128.6,240.9 129.1,242.5 129.6,253.3 130.1,267.4 130.6,249.2 131.1,249.1 131.5,245.7 132.0,238.1 132.5,235.5 133.0,238.8 133.5,246.2 134.0,249.4 134.5,250.1 135.0,259.6 135.4,253.3 135.9,251.0 136.4,242.7 136.9,247.8 137.4,238.0 137.9,266.7 138.4,244.2 138.8,240.0 139.3,242.4 139.8,257.1 140.3,251.3 140.8,248.4 141.3,258.9 141.8,243.8 142.2,241.3 142.7,243.0 143.2,239.5 143.7,237.1 144.2,263.2 144.7,239.6 145.2,243.1 145.7,242.0 146.1,235.1 146.6,246.3 147.1,239.6 147.6,239.0 148.1,239.9 148.6,233.9 149.1,235.5 149.5,233.7 150.0,240.0 150.5,259.2 151.0,237.5 151.5,239.4 152.0,242.4 152.5,245.9 152.9,239.0 153.4,235.8 153.9,235.0 154.4,229.7 154.9,227.6 155.4,235.4 155.9,255.2 156.4,239.5 156.8,237.1 157.3,238.7 157.8,237.1 158.3,232.7 158.8,249.0 159.3,246.1 159.8,235.3 160.2,258.5 160.7,240.5 161.2,233.9 161.7,244.6 162.2,240.9 162.7,238.5 163.2,239.6 163.6,237.4 164.1,233.9 164.6,243.6 165.1,237.7 165.6,231.7 166.1,235.4 166.6,233.9 167.1,225.9 167.5,224.5 168.0,233.7 168.5,232.7 169.0,228.9 169.5,242.1 170.0,250.2 170.5,249.0 170.9,236.0 171.4,233.9 171.9,240.2 172.4,244.7 172.9,230.8 173.4,235.5 173.9,231.9 174.3,232.0 174.8,227.9 175.3,222.5 175.8,225.6 176.3,226.8 176.8,235.6 177.3,238.6 177.8,237.6 178.2,240.5 178.7,250.2 179.2,231.1 179.7,235.0 180.2,225.6 180.7,225.8 181.2,241.1 181.6,234.5 182.1,223.9 182.6,226.7 183.1,227.4 183.6,233.8 184.1,231.7 184.6,230.3 185.0,232.4 185.5,227.3 186.0,226.0 186.5,229.6 187.0,225.3 187.5,223.8 188.0,226.7 188.5,219.5 188.9,218.7 189.4,221.0 189.9,231.8 190.4,229.4 190.9,226.3 191.4,236.0 191.9,233.3 192.3,228.3 192.8,222.9 193.3,235.3 193.8,227.3 194.3,230.3 194.8,231.3 195.3,226.4 195.7,222.8 196.2,223.8 196.7,227.6 197.2,233.3 197.7,235.3 198.2,241.4 198.7,228.5 199.2,226.1 199.6,236.6 200.1,239.8 200.6,230.5 201.1,260.0 201.6,223.4 202.1,226.7 202.6,226.6 203.0,233.0 203.5,228.9 204.0,223.0 204.5,222.1 205.0,223.1 205.5,225.7 206.0,231.1 206.4,241.4 206.9,231.1 207.4,233.8 207.9,226.2 208.4,225.0 208.9,231.4 209.4,226.5 209.9,235.1 210.3,234.5 210.8,239.1 211.3,237.2 211.8,240.9 212.3,247.2 212.8,234.4 213.3,242.9 213.7,238.2 214.2,267.4 214.7,232.3 215.2,231.5 215.7,229.4 216.2,218.5 216.7,220.8 217.1,226.6 217.6,224.1 218.1,225.3 218.6,232.1 219.1,237.2 219.6,239.9 220.1,242.5 220.6,247.1 221.0,230.2 221.5,228.0 222.0,226.0 222.5,225.2 223.0,231.0 223.5,236.1 224.0,230.5 224.4,241.3 224.9,240.4 225.4,227.6 225.9,230.9 226.4,233.9 226.9,232.5 227.4,236.7 227.8,237.8 228.3,228.5 228.8,234.1 229.3,226.6 229.8,242.9 230.3,239.9 230.8,228.8 231.3,240.1 231.7,224.2 232.2,220.8 232.7,226.2 233.2,234.5 233.7,242.2 234.2,233.5 234.7,239.3 235.1,228.1 235.6,227.3 236.1,235.3 236.6,267.6 237.1,229.2 237.6,223.9 238.1,238.0 238.5,226.4 239.0,232.5 239.5,243.3 240.0,234.6 240.5,224.6 241.0,232.0 241.5,225.3 242.0,229.1 242.4,229.5 242.9,231.4 243.4,240.2 243.9,240.5 244.4,232.4 244.9,232.6 245.4,233.9 245.8,235.2 246.3,226.3 246.8,238.3 247.3,235.9 247.8,230.6 248.3,232.8 248.8,243.6 249.2,240.5 249.7,241.5 250.2,229.2 250.7,225.4 251.2,223.4 251.7,224.0 252.2,225.5 252.7,232.1 253.1,226.3 253.6,227.8 254.1,222.8 254.6,221.1 255.1,246.8 255.6,224.7 256.1,230.3 256.5,228.4 257.0,230.6 257.5,227.3 258.0,232.5 258.5,223.3 259.0,227.3 259.5,232.6 259.9,235.0 260.4,244.0 260.9,229.8 261.4,229.9 261.9,254.5 262.4,236.9 262.9,228.6 263.4,230.6 263.8,235.0 264.3,237.7 264.8,243.8 265.3,235.2 265.8,232.7 266.3,230.2 266.8,237.5 267.2,232.7 267.7,232.0 268.2,234.5 268.7,222.7 269.2,226.1 269.7,244.5 270.2,233.8 270.6,227.7 271.1,227.0 271.6,234.1 272.1,240.7 272.6,229.1 273.1,228.9 273.6,224.5 274.1,226.1 274.5,229.5 275.0,227.9 275.5,221.8 276.0,220.5 276.5,221.2 277.0,232.7 277.5,226.4 277.9,227.1 278.4,224.9 278.9,223.6 279.4,225.8 279.9,220.8 280.4,223.7 280.9,232.2 281.3,219.4 281.8,221.5 282.3,233.5 282.8,236.5 283.3,229.5 283.8,224.9 284.3,233.4 284.8,232.6 285.2,235.9 285.7,234.6 286.2,243.0 286.7,234.2 287.2,242.0 287.7,237.8 288.2,231.0 288.6,236.3 289.1,232.8 289.6,242.8 290.1,228.4 290.6,228.1 291.1,227.1 291.6,223.6 292.0,234.1 292.5,227.2 293.0,218.8 293.5,219.3 294.0,225.5 294.5,222.9 295.0,225.8 295.5,221.4 295.9,217.2 296.4,219.0 296.9,224.8 297.4,244.1 297.9,223.0 298.4,218.3 298.9,230.4 299.3,230.1 299.8,252.6 300.3,241.3 300.8,221.1 301.3,223.2 301.8,232.5 302.3,237.7 302.7,223.7 303.2,229.3 303.7,218.8 304.2,215.7 304.7,230.1 305.2,233.1 305.7,221.0 306.2,223.9 306.6,216.9 307.1,221.2 307.6,225.5 308.1,237.3 308.6,226.3 309.1,211.7 309.6,208.1 310.0,210.6 310.5,218.2 311.0,223.2 311.5,219.4 312.0,223.8 312.5,220.5 313.0,222.5 313.4,230.4 313.9,235.5 314.4,233.4 314.9,227.8 315.4,227.5 315.9,224.2 316.4,215.2 316.9,217.1 317.3,229.1 317.8,220.1 318.3,215.6 318.8,215.3 319.3,218.3 319.8,236.4 320.3,236.0 320.7,220.5 321.2,216.0 321.7,233.6 322.2,219.2 322.7,217.2 323.2,226.4 323.7,220.2 324.1,223.7 324.6,227.7 325.1,219.7 325.6,218.2 326.1,215.1 326.6,211.2 327.1,218.2 327.6,226.0 328.0,221.3 328.5,226.1 329.0,231.9 329.5,229.4 330.0,225.1 330.5,218.7 331.0,217.3 331.4,215.0 331.9,215.5 332.4,221.8 332.9,234.1 333.4,222.8 333.9,214.1 334.4,216.0 334.8,216.3 335.3,208.3 335.8,206.6 336.3,215.8 336.8,223.5 337.3,213.2 337.8,207.7 338.3,212.1 338.7,228.4 339.2,228.7 339.7,222.7 340.2,215.0 340.7,216.9 341.2,226.7 341.7,228.1 342.1,210.9 342.6,214.3 343.1,214.8 343.6,211.9 344.1,216.1 344.6,212.4 345.1,220.5 345.5,227.2 346.0,223.1 346.5,212.1 347.0,217.8 347.5,210.9 348.0,215.6 348.5,219.9 349.0,209.7 349.4,239.8 349.9,207.0 350.4,206.3 350.9,211.3 351.4,208.8 351.9,208.1 352.4,213.1 352.8,215.3 353.3,202.4 353.8,201.3 354.3,204.5 354.8,203.8 355.3,203.8 355.8,208.4 356.2,208.8 356.7,212.0 357.2,213.7 357.7,203.4 358.2,202.9 358.7,217.4 359.2,221.4 359.7,201.2 360.1,197.2 360.6,202.6 361.1,207.9 361.6,202.7 362.1,195.4 362.6,198.2 363.1,208.3 363.5,210.0 364.0,196.8 364.5,198.4 365.0,205.0 365.5,236.8 366.0,198.9 366.5,205.0 366.9,209.6 367.4,203.5 367.9,200.2 368.4,204.6 368.9,205.1 369.4,207.9 369.9,206.2 370.4,214.3 370.8,201.8 371.3,206.1 371.8,211.8 372.3,200.6 372.8,203.9 373.3,203.6 373.8,206.2 374.2,212.0 374.7,214.7 375.2,196.7 375.7,190.8 376.2,197.6 376.7,215.9 377.2,211.0 377.6,201.3 378.1,194.1 378.6,196.4 379.1,197.9 379.6,189.0 380.1,188.3 380.6,196.6 381.1,215.4 381.5,191.1 382.0,190.9 382.5,194.1 383.0,189.2 383.5,187.3 384.0,191.6 384.5,191.1 384.9,195.5 385.4,186.2 385.9,187.6 386.4,196.0 386.9,190.0 387.4,184.9 387.9,185.1 388.3,189.0 388.8,211.0 389.3,188.0 389.8,197.2 390.3,183.6 390.8,179.9 391.3,189.3 391.8,188.1 392.2,192.8 392.7,193.1 393.2,189.9 393.7,190.8 394.2,200.9 394.7,188.2 395.2,193.4 395.6,193.7 396.1,189.6 396.6,195.1 397.1,201.9 397.6,192.3 398.1,188.3 398.6,186.0 399.0,186.8 399.5,189.2 400.0,199.3 400.5,179.6 401.0,175.6 401.5,181.8 402.0,199.5 402.5,199.2 402.9,196.1 403.4,198.9 403.9,184.9 404.4,180.3 404.9,181.8 405.4,178.7 405.9,179.3 406.3,188.0 406.8,193.0 407.3,183.3 407.8,184.8 408.3,175.1 408.8,180.1 409.3,175.9 409.7,167.2 410.2,160.0 410.7,166.1 411.2,161.0 411.7,160.3 412.2,167.2 412.7,177.0 413.2,154.0 413.6,176.2 414.1,151.7 414.6,180.1 415.1,150.1 415.6,180.8 416.1,150.1 416.6,180.1 417.0,134.5 417.5,146.0 418.0,141.7 418.5,139.1 419.0,141.7 419.5,146.0 420.0,134.5 420.4,180.1 420.9,150.1 421.4,180.8 421.9,150.1 422.4,180.1 422.9,151.7 423.4,176.2 423.8,154.0 424.3,177.0 424.8,167.2 425.3,160.3 425.8,161.0 426.3,166.1 426.8,160.0 427.3,167.2 427.7,175.9 428.2,180.1 428.7,175.1 429.2,184.8 429.7,183.3 430.2,193.0 430.7,188.0 431.1,179.3 431.6,178.7 432.1,181.8 432.6,180.3 433.1,184.9 433.6,198.9 434.1,196.1 434.5,199.2 435.0,199.5 435.5,181.8 436.0,175.6 436.5,179.6 437.0,199.3 437.5,189.2 438.0,186.8 438.4,186.0 438.9,188.3 439.4,192.3 439.9,201.9 440.4,195.1 440.9,189.6 441.4,193.7 441.8,193.4 442.3,188.2 442.8,200.9 443.3,190.8 443.8,189.9 444.3,193.1 444.8,192.8 445.2,188.1 445.7,189.3 446.2,179.9 446.7,183.6 447.2,197.2 447.7,188.0 448.2,211.0 448.7,189.0 449.1,185.1 449.6,184.9 450.1,190.0 450.6,196.0 451.1,187.6 451.6,186.2 452.1,195.5 452.5,191.1 453.0,191.6 453.5,187.3 454.0,189.2 454.5,194.1 455.0,190.9 455.5,191.1 455.9,215.4 456.4,196.6 456.9,188.3 457.4,189.0 457.9,197.9 458.4,196.4 458.9,194.1 459.4,201.3 459.8,211.0 460.3,215.9 460.8,197.6 461.3,190.8 461.8,196.7 462.3,214.7 462.8,212.0 463.2,206.2 463.7,203.6 464.2,203.9 464.7,200.6 465.2,211.8 465.7,206.1 466.2,201.8 466.6,214.3 467.1,206.2 467.6,207.9 468.1,205.1 468.6,204.6 469.1,200.2 469.6,203.5 470.1,209.6 470.5,205.0 471.0,198.9 471.5,236.8 472.0,205.0 472.5,198.4 473.0,196.8 473.5,210.0 473.9,208.3 474.4,198.2 474.9,195.4 475.4,202.7 475.9,207.9 476.4,202.6 476.9,197.2 477.3,201.2 477.8,221.4 478.3,217.4 478.8,202.9 479.3,203.4 479.8,213.7 480.3,212.0 480.8,208.8 481.2,208.4 481.7,203.8 482.2,203.8 482.7,204.5 483.2,201.3 483.7,202.4 484.2,215.3 484.6,213.1 485.1,208.1 485.6,208.8 486.1,211.3 486.6,206.3 487.1,207.0 487.6,239.8 488.0,209.7 488.5,219.9 489.0,215.6 489.5,210.9 490.0,217.8 490.5,212.1 491.0,223.1 491.5,227.2 491.9,220.5 492.4,212.4 492.9,216.1 493.4,211.9 493.9,214.8 494.4,214.3 494.9,210.9 495.3,228.1 495.8,226.7 496.3,216.9 496.8,215.0 497.3,222.7 497.8,228.7 498.3,228.4 498.7,212.1 499.2,207.7 499.7,213.2 500.2,223.5 500.7,215.8 501.2,206.6 501.7,208.3 502.2,216.3 502.6,216.0 503.1,214.1 503.6,222.8 504.1,234.1 504.6,221.8 505.1,215.5 505.6,215.0 506.0,217.3 506.5,218.7 507.0,225.1 507.5,229.4 508.0,231.9 508.5,226.1 509.0,221.3 509.4,226.0 509.9,218.2 510.4,211.2 510.9,215.1 511.4,218.2 511.9,219.7 512.4,227.7 512.9,223.7 513.3,220.2 513.8,226.4 514.3,217.2 514.8,219.2 515.3,233.6 515.8,216.0 516.3,220.5 516.7,236.0 517.2,236.4 517.7,218.3 518.2,215.3 518.7,215.6 519.2,220.1 519.7,229.1 520.1,217.1 520.6,215.2 521.1,224.2 521.6,227.5 522.1,227.8 522.6,233.4 523.1,235.5 523.6,230.4 524.0,222.5 524.5,220.5 525.0,223.8 525.5,219.4 526.0,223.2 526.5,218.2 527.0,210.6 527.4,208.1 527.9,211.7 528.4,226.3 528.9,237.3 529.4,225.5 529.9,221.2 530.4,216.9 530.8,223.9 531.3,221.0 531.8,233.1 532.3,230.1 532.8,215.7 533.3,218.8 533.8,229.3 534.3,223.7 534.7,237.7 535.2,232.5 535.7,223.2 536.2,221.1 536.7,241.3 537.2,252.6 537.7,230.1 538.1,230.4 538.6,218.3 539.1,223.0 539.6,244.1 540.1,224.8 540.6,219.0 541.1,217.2 541.5,221.4 542.0,225.8 542.5,222.9 543.0,225.5 543.5,219.3 544.0,218.8 544.5,227.2 545.0,234.1 545.4,223.6 545.9,227.1 546.4,228.1 546.9,228.4 547.4,242.8 547.9,232.8 548.4,236.3 548.8,231.0 549.3,237.8 549.8,242.0 550.3,234.2 550.8,243.0 551.3,234.6 551.8,235.9 552.2,232.6 552.7,233.4 553.2,224.9 553.7,229.5 554.2,236.5 554.7,233.5 555.2,221.5 555.7,219.4 556.1,232.2 556.6,223.7 557.1,220.8 557.6,225.8 558.1,223.6 558.6,224.9 559.1,227.1 559.5,226.4 560.0,232.7 560.5,221.2 561.0,220.5 561.5,221.8 562.0,227.9 562.5,229.5 562.9,226.1 563.4,224.5 563.9,228.9 564.4,229.1 564.9,240.7 565.4,234.1 565.9,227.0 566.4,227.7 566.8,233.8 567.3,244.5 567.8,226.1 568.3,222.7 568.8,234.5 569.3,232.0 569.8,232.7 570.2,237.5 570.7,230.2 571.2,232.7 571.7,235.2 572.2,243.8 572.7,237.7 573.2,235.0 573.6,230.6 574.1,228.6 574.6,236.9 575.1,254.5 575.6,229.9 576.1,229.8 576.6,244.0 577.1,235.0 577.5,232.6 578.0,227.3 578.5,223.3 579.0,232.5 579.5,227.3 580.0,230.6 580.5,228.4 580.9,230.3 581.4,224.7 581.9,246.8 582.4,221.1 582.9,222.8 583.4,227.8 583.9,226.3 584.3,232.1 584.8,225.5 585.3,224.0 585.8,223.4 586.3,225.4 586.8,229.2 587.3,241.5 587.8,240.5 588.2,243.6 588.7,232.8 589.2,230.6 589.7,235.9 590.2,238.3 590.7,226.3 591.2,235.2 591.6,233.9 592.1,232.6 592.6,232.4 593.1,240.5 593.6,240.2 594.1,231.4 594.6,229.5 595.0,229.1 595.5,225.3 596.0,232.0 596.5,224.6 597.0,234.6 597.5,243.3 598.0,232.5 598.5,226.4 598.9,238.0 599.4,223.9 599.9,229.2 600.4,267.6 600.9,235.3 601.4,227.3 601.9,228.1 602.3,239.3 602.8,233.5 603.3,242.2 603.8,234.5 604.3,226.2 604.8,220.8 605.3,224.2 605.7,240.1 606.2,228.8 606.7,239.9 607.2,242.9 607.7,226.6 608.2,234.1 608.7,228.5 609.2,237.8 609.6,236.7 610.1,232.5 610.6,233.9 611.1,230.9 611.6,227.6 612.1,240.4 612.6,241.3 613.0,230.5 613.5,236.1 614.0,231.0 614.5,225.2 615.0,226.0 615.5,228.0 616.0,230.2 616.4,247.1 616.9,242.5 617.4,239.9 617.9,237.2 618.4,232.1 618.9,225.3 619.4,224.1 619.9,226.6 620.3,220.8 620.8,218.5 621.3,229.4 621.8,231.5 622.3,232.3 622.8,267.4 623.3,238.2 623.7,242.9 624.2,234.4 624.7,247.2 625.2,240.9 625.7,237.2 626.2,239.1 626.7,234.5 627.1,235.1 627.6,226.5 628.1,231.4 628.6,225.0 629.1,226.2 629.6,233.8 630.1,231.1 630.6,241.4 631.0,231.1 631.5,225.7 632.0,223.1 632.5,222.1 633.0,223.0 633.5,228.9 634.0,233.0 634.4,226.6 634.9,226.7 635.4,223.4 635.9,260.0 636.4,230.5 636.9,239.8 637.4,236.6 637.8,226.1 638.3,228.5 638.8,241.4 639.3,235.3 639.8,233.3 640.3,227.6 640.8,223.8 641.3,222.8 641.7,226.4 642.2,231.3 642.7,230.3 643.2,227.3 643.7,235.3 644.2,222.9 644.7,228.3 645.1,233.3 645.6,236.0 646.1,226.3 646.6,229.4 647.1,231.8 647.6,221.0 648.1,218.7 648.5,219.5 649.0,226.7 649.5,223.8 650.0,225.3 650.5,229.6 651.0,226.0 651.5,227.3 652.0,232.4 652.4,230.3 652.9,231.7 653.4,233.8 653.9,227.4 654.4,226.7 654.9,223.9 655.4,234.5 655.8,241.1 656.3,225.8 656.8,225.6 657.3,235.0 657.8,231.1 658.3,250.2 658.8,240.5 659.2,237.6 659.7,238.6 660.2,235.6 660.7,226.8 661.2,225.6 661.7,222.5 662.2,227.9 662.7,232.0 663.1,231.9 663.6,235.5 664.1,230.8 664.6,244.7 665.1,240.2 665.6,233.9 666.1,236.0 666.5,249.0 667.0,250.2 667.5,242.1 668.0,228.9 668.5,232.7 669.0,233.7 669.5,224.5 669.9,225.9 670.4,233.9 670.9,235.4 671.4,231.7 671.9,237.7 672.4,243.6 672.9,233.9 673.4,237.4 673.8,239.6 674.3,238.5 674.8,240.9 675.3,244.6 675.8,233.9 676.3,240.5 676.8,258.5 677.2,235.3 677.7,246.1 678.2,249.0 678.7,232.7 679.2,237.1 679.7,238.7 680.2,237.1 680.6,239.5 681.1,255.2 681.6,235.4 682.1,227.6 682.6,229.7 683.1,235.0 683.6,235.8 684.1,239.0 684.5,245.9 685.0,242.4 685.5,239.4 686.0,237.5 686.5,259.2 687.0,240.0 687.5,233.7 687.9,235.5 688.4,233.9 688.9,239.9 689.4,239.0 689.9,239.6 690.4,246.3 690.9,235.1 691.3,242.0 691.8,243.1 692.3,239.6 692.8,263.2 693.3,237.1 693.8,239.5 694.3,243.0 694.8,241.3 695.2,243.8 695.7,258.9 696.2,248.4 696.7,251.3 697.2,257.1 697.7,242.4 698.2,240.0 698.6,244.2 699.1,266.7 699.6,238.0 700.1,247.8 700.6,242.7 701.1,251.0 701.6,253.3 702.0,259.6 702.5,250.1 703.0,249.4 703.5,246.2 704.0,238.8 704.5,235.5 705.0,238.1 705.5,245.7 705.9,249.1 706.4,249.2 706.9,267.4 707.4,253.3 707.9,242.5 708.4,240.9 708.9,246.0 709.3,263.6 709.8,246.1 710.3,249.2 710.8,263.5 711.3,269.5 711.8,254.7 712.3,247.9 712.7,245.6 713.2,248.4 713.7,259.7 714.2,266.8 714.7,249.5 715.2,250.5 715.7,245.1 716.2,239.4 716.6,250.8 717.1,271.6 717.6,246.4 718.1,247.5 718.6,248.7 719.1,252.6 719.6,247.5 720.0,252.0 720.5,243.7 721.0,249.4 721.5,242.4 722.0,244.1 722.5,253.3 723.0,261.0 723.4,248.1 723.9,239.5 724.4,240.8 724.9,250.5 725.4,258.7 725.9,249.7 726.4,249.2 726.9,247.8 727.3,252.1 727.8,250.0 728.3,246.0 728.8,246.4 729.3,250.2 729.8,251.7 730.3,253.3 730.7,256.3 731.2,256.8 731.7,253.2 732.2,261.7 732.7,258.3 733.2,249.5 733.7,251.2 734.1,256.2 734.6,259.9 735.1,258.8 735.6,264.9 736.1,271.6 736.6,268.7 737.1,271.6 737.6,256.5 738.0,255.1 738.5,267.6 739.0,258.3 739.5,267.0 740.0,256.9 740.5,256.4 741.0,251.9 741.4,246.0 741.9,256.4 742.4,263.4 742.9,250.4 743.4,255.2 743.9,251.5 744.4,247.2 744.8,249.0 745.3,255.2 745.8,260.6 746.3,266.1 746.8,264.5 747.3,255.1 747.8,251.9 748.3,260.7 748.7,257.9 749.2,256.4 749.7,252.6 750.2,255.0 750.7,253.2 751.2,248.8 751.7,254.6 752.1,253.5 752.6,263.5 753.1,267.9 753.6,253.5 754.1,261.5 754.6,260.8 755.1,271.8 755.5,258.8 756.0,250.6 756.5,250.7 757.0,260.1 757.5,272.1 758.0,253.3 758.5,251.0 759.0,261.6 759.4,259.0 759.9,260.1 760.4,260.6 760.9,260.9 761.4,254.3 761.9,262.6 762.4,257.7 762.8,253.6 763.3,270.8 763.8,258.8 764.3,260.0 764.8,253.8 765.3,254.4 765.8,251.5 766.2,246.4 766.7,247.8 767.2,288.1 767.7,253.3 768.2,260.2 768.7,263.2 769.2,255.5 769.7,251.2 770.1,251.7 770.6,260.2 771.1,267.0 771.6,258.7 772.1,256.6 772.6,260.9 773.1,276.3 773.5,264.6 774.0,268.9 774.5,263.8 775.0,258.7 775.5,270.3 776.0,266.0 776.5,266.4 776.9,261.9 777.4,253.3 777.9,267.3 778.4,270.2 778.9,270.3 779.4,258.0 779.9,254.6 780.4,259.3 780.8,281.4 781.3,259.5 781.8,260.7 782.3,264.8 782.8,262.1 783.3,261.9 783.8,260.3 784.2,265.2 784.7,271.7 785.2,262.1 785.7,261.8 786.2,265.1 786.7,270.5 787.2,278.2 787.6,280.8 788.1,280.7 788.6,265.9 789.1,285.1 789.6,267.3 790.1,274.2 790.6,263.8 791.1,261.4 791.5,265.7 792.0,262.3" fill="none" stroke="#139fff" stroke-width="1"/>
<line x1="79.5" y1="96" x2="79.5" y2="480" stroke="#afafaf" stroke-opacity="0.28"/>
<line x1="164.5" y1="96" x2="164.5" y2="480" stroke="#afafaf" stroke-opacity="0.28"/>
<line x1="249.5" y1="96" x2="249.5" y2="480" stroke="#afafaf" stroke-opacity="0.28"/>
<line x1="333.5" y1="96" x2="333.5" y2="480" stroke="#afafaf" stroke-opacity="0.28"/>
<line x1="418.5" y1="96" x2="418.5" y2="480" stroke="#afafaf" stroke-opacity="0.28"/>
<line x1="503.5" y1="96" x2="503.5" y2="480" stroke="#afafaf" stroke-opacity="0.28"/>
<line x1="587.5" y1="96" x2="587.5" y2="480" stroke="#afafaf" stroke-opacity="0.28"/>
<line x1="672.5" y1="96" x2="672.5" y2="480" stroke="#afafaf" stroke-opacity="0.28"/>
<line x1="757.5" y1="96" x2="757.5" y2="480" stroke="#afafaf" stroke-opacity="0.28"/>
<line x1="45" y1="155.5" x2="792" y2="155.5" stroke="#afafaf" stroke-opacity="0.28"/>
<line x1="45" y1="232.5" x2="792" y2="232.5" stroke="#afafaf" stroke-opacity="0.28"/>
<line x1="45" y1="308.5" x2="792" y2="308.5" stroke="#afafaf" stroke-opacity="0.28"/>
<line x1="45" y1="385.5" x2="792" y2="385.5" stroke="#afafaf" stroke-opacity="0.28"/>
<line x1="45" y1="462.5" x2="792" y2="462.5" stroke="#afafaf" stroke-opacity="0.28"/>
<line x1="79.5" y1="473" x2="79.5" y2="480" stroke="#afafaf"/>
<line x1="79.5" y1="95" x2="79.5" y2="102" stroke="#afafaf"/>
<line x1="164.5" y1="473" x2="164.5" y2="480" stroke="#afafaf"/>
<line x1="164.5" y1="95" x2="164.5" y2="102" stroke="#afafaf"/>
<line x1="249.5" y1="473" x2="249.5" y2="480" stroke="#afafaf"/>
<line x1="249.5" y1="95" x2="249.5" y2="102" stroke="#afafaf"/>
<line x1="333.5" y1="473" x2="333.5" y2="480" stroke="#afafaf"/>
<line x1="333.5" y1="95" x2="333.5" y2="102" stroke="#afafaf"/>
<line x1="418.5" y1="473" x2="418.5" y2="480" stroke="#afafaf"/>
<line x1="418.5" y1="95" x2="418.5" y2="102" stroke="#afafaf"/>
<line x1="503.5" y1="473" x2="503.5" y2="480" stroke="#afafaf"/>
<line x1="503.5" y1="95" x2="503.5" y2="102" stroke="#afafaf"/>
<line x1="587.5" y1="473" x2="587.5" y2="480" stroke="#afafaf"/>
<line x1="587.5" y1="95" x2="587.5" y2="102" stroke="#afafaf"/>
<line x1="672.5" y1="473" x2="672.5" y2="480" stroke="#afafaf"/>
<line x1="672.5" y1="95" x2="672.5" y2="102" stroke="#afafaf"/>
<line x1="757.5" y1="473" x2="757.5" y2="480" stroke="#afafaf"/>
<line x1="757.5" y1="95" x2="757.5" y2="102" stroke="#afafaf"/>
<line x1="44" y1="155.5" x2="52" y2="155.5" stroke="#afafaf"/>
<line x1="785" y1="155.5" x2="793" y2="155.5" stroke="#afafaf"/>
<line x1="44" y1="232.5" x2="52" y2="232.5" stroke="#afafaf"/>
<line x1="785" y1="232.5" x2="793" y2="232.5" stroke="#afafaf"/>
<line x1="44" y1="308.5" x2="52" y2="308.5" stroke="#afafaf"/>
<line x1="785" y1="308.5" x2="793" y2="308.5" stroke="#afafaf"/>
<line x1="44" y1="385.5" x2="52" y2="385.5" stroke="#afafaf"/>
<line x1="785" y1="385.5" x2="793" y2="385.5" stroke="#afafaf"/>
<line x1="44" y1="462.5" x2="52" y2="462.5" stroke="#afafaf"/>
<line x1="785" y1="462.5" x2="793" y2="462.5" stroke="#afafaf"/>
<rect x="44.5" y="95.5" width="748" height="385" fill="none" stroke="#afafaf"/>
</svg>
<div class="xl" style="left:59.8px">-20</div>
<div class="xl" style="left:143.7px">-15</div>
<div class="xl" style="left:228.7px">-10</div>
<div class="xl" style="left:314.3px">-5</div>
<div class="xl" style="left:400.3px">0</div>
<div class="xl" style="left:486.3px">5</div>
<div class="xl" style="left:568.3px">10</div>
<div class="xl" style="left:653.8px">15</div>
<div class="xl" style="left:737.8px">20</div>
<div class="yl" style="top:149.5px">0</div>
<div class="yl" style="top:226.5px">-50</div>
<div class="yl" style="top:302.5px">-100</div>
<div class="yl" style="top:379.5px">-150</div>
<div class="yl" style="top:456.5px">-200</div>
<div class="a" id="xlab" style="left:318px;top:494px;width:200px;text-align:center;font-size:9.7px;line-height:13px;color:#afafaf">Frequency (kHz)</div>
<div class="a" id="ylab" style="left:-36px;top:280.5px;width:100px;height:12px;text-align:center;font-size:9.6px;line-height:12px;color:#afafaf;transform:rotate(-90deg)">dBm</div>
<!-- legend -->
<div class="a" style="left:618px;top:104px;width:165px;height:28px;border:1px solid #d4d4d4;background:#000"></div>
<div class="a" style="left:622px;top:112px;width:31px;height:1px;background:#ffff11"></div>
<div class="a" style="left:622px;top:124px;width:31px;height:1px;background:#139fff"></div>
<div class="a" id="lg1" style="left:657.3px;top:106px;font-size:9px;line-height:12px;color:#d2d2d2;white-space:nowrap">Frequency-Weighted Signal</div>
<div class="a" id="lg2" style="left:657.3px;top:118.5px;font-size:9px;line-height:12px;color:#d2d2d2;white-space:nowrap">Original Signal</div>

<!-- ===== status bar ===== -->
<div class="a" style="left:6px;top:508px;width:800px;height:23px;background:#f0f0f0"></div>
<div class="a" id="rdy" style="left:8px;top:512px;font-size:10px;line-height:14px">Ready</div>
<div class="sb" style="left:514px;width:95px">RBW=43.066 Hz</div>
<div class="sb" style="left:616px;width:130px">Sample rate=44.1 kHz</div>
<div class="sb" style="left:753px;width:47px;letter-spacing:-0.16px">T=1.997</div>
</div></body></html>
